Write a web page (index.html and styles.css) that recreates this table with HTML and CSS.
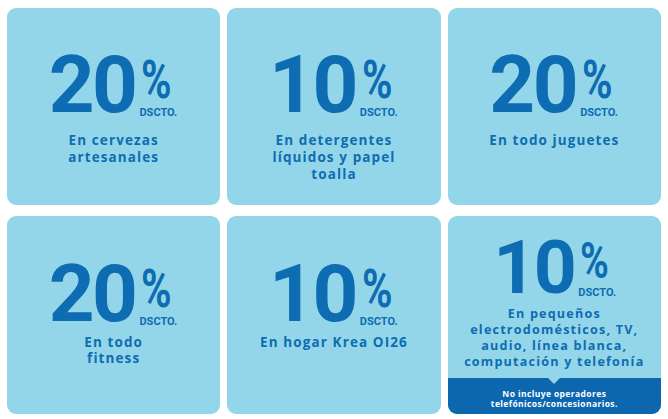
FILE: index.html
```html
<!DOCTYPE html>
<html lang="es">
<head>
<meta charset="utf-8">
<title>Descuentos</title>
<link rel="stylesheet" href="styles.css">
</head>
<body>
<main class="grid">
  <section class="card">
    <div class="amount"><span class="num">20</span><span class="side"><span class="pct">%</span><span class="dscto">DSCTO.</span></span></div>
    <p class="desc">En cervezas<br>artesanales</p>
  </section>
  <section class="card">
    <div class="amount"><span class="num">10</span><span class="side"><span class="pct">%</span><span class="dscto">DSCTO.</span></span></div>
    <p class="desc">En detergentes<br>líquidos y papel<br>toalla</p>
  </section>
  <section class="card">
    <div class="amount"><span class="num">20</span><span class="side"><span class="pct">%</span><span class="dscto">DSCTO.</span></span></div>
    <p class="desc">En todo juguetes</p>
  </section>
  <section class="card card-low">
    <div class="amount"><span class="num">20</span><span class="side"><span class="pct">%</span><span class="dscto">DSCTO.</span></span></div>
    <p class="desc">En todo<br>fitness</p>
  </section>
  <section class="card card-low">
    <div class="amount"><span class="num">10</span><span class="side"><span class="pct">%</span><span class="dscto">DSCTO.</span></span></div>
    <p class="desc">En hogar Krea OI26</p>
  </section>
  <section class="card card-compact">
    <div class="amount"><span class="num">10</span><span class="side"><span class="pct">%</span><span class="dscto">DSCTO.</span></span></div>
    <p class="desc">En pequeños<br>electrodomésticos, TV,<br>audio, línea blanca,<br>computación y telefonía</p>
    <div class="note">No incluye operadores<br>telefónicos/concesionarios.</div>
  </section>
</main>
</body>
</html>
```

FILE: styles.css
```css
* { box-sizing: border-box; }

html, body {
  margin: 0;
  padding: 0;
  background: #ffffff;
}

body {
  width: 668px;
  height: 419px;
  overflow: hidden;
  font-family: "Open Sans", "Liberation Sans", sans-serif;
  color: #0d6cb2;
}

.grid {
  display: grid;
  grid-template-columns: repeat(3, 1fr);
  grid-template-rows: 197px 198px;
  column-gap: 7px;
  row-gap: 11px;
  padding: 8px 7px 0 7px;
}

.card {
  position: relative;
  background: #94d6e9;
  border-radius: 9px;
  overflow: hidden;
  display: flex;
  flex-direction: column;
  align-items: center;
  padding-top: 49px;
}

.amount {
  display: flex;
  align-items: stretch;
  justify-content: center;
  margin-left: 2px;
}

.num {
  font-family: Roboto, "Liberation Sans", sans-serif;
  font-weight: 700;
  font-size: 80px;
  line-height: 57px;
  height: 57px;
  letter-spacing: -2.5px;
}

.side {
  display: flex;
  flex-direction: column;
  justify-content: space-between;
  align-items: flex-start;
  margin-left: 6px;
}

.pct {
  font-family: Roboto, "Liberation Sans", sans-serif;
  font-weight: 700;
  font-size: 53px;
  line-height: 39px;
  margin-top: 4px;
  transform: scaleX(0.78);
  transform-origin: left center;
}

.dscto {
  font-family: Roboto, "Liberation Sans", sans-serif;
  font-weight: 700;
  font-size: 11px;
  line-height: 8px;
  margin-bottom: -3px;
  margin-left: -2px;
}

.desc {
  margin: 18px 0 0 0;
  font-size: 13.5px;
  font-weight: 700;
  line-height: 17px;
  letter-spacing: 1.1px;
  text-align: center;
}

.card-low {
  padding-top: 50px;
}

.card-low .desc {
  margin-top: 11px;
  line-height: 16px;
}

.card-compact {
  padding-top: 24px;
}

.card-compact .num {
  font-size: 75px;
  line-height: 54px;
  height: 54px;
}

.card-compact .pct {
  font-size: 50px;
  line-height: 37px;
  margin-top: 3px;
}

.card-compact .desc {
  margin-top: 12px;
  font-size: 12.6px;
  line-height: 16px;
  letter-spacing: 1.2px;
}

.note {
  position: relative;
  margin-top: auto;
  width: 100%;
  height: 36px;
  background: #0c67af;
  color: #ffffff;
  font-size: 8.5px;
  font-weight: 700;
  line-height: 9.5px;
  letter-spacing: 0.4px;
  text-align: center;
  padding-top: 11px;
}

.note::before {
  content: "";
  position: absolute;
  top: 0;
  left: 50%;
  margin-left: -6px;
  border-top: 6px solid #94d6e9;
  border-left: 6px solid transparent;
  border-right: 6px solid transparent;
}
```
